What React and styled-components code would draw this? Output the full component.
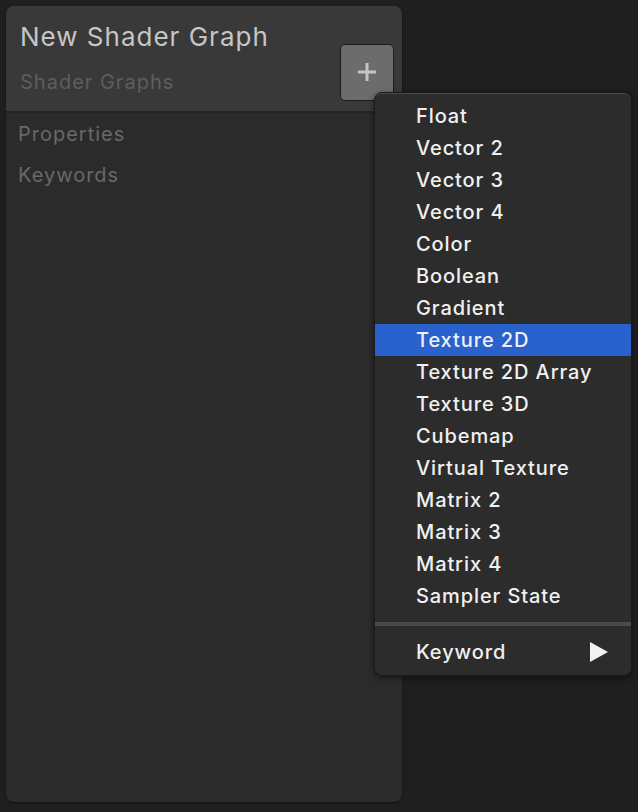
import React from 'react';
import styled, { createGlobalStyle } from 'styled-components';

const GlobalStyle = createGlobalStyle`
    html, body {
        margin: 0;
        padding: 0;
        background: #1f1f1f;
        font-family: Inter, "Liberation Sans", sans-serif;
        -webkit-font-smoothing: antialiased;
    }
`;

const items = [
    'Float', 'Vector 2', 'Vector 3', 'Vector 4', 'Color', 'Boolean', 'Gradient',
    'Texture 2D', 'Texture 2D Array', 'Texture 3D', 'Cubemap', 'Virtual Texture',
    'Matrix 2', 'Matrix 3', 'Matrix 4', 'Sampler State',
];

const App = () => {
    return (
        <Page>
            <GlobalStyle />
            <Blackboard>
                <Header>
                    <Titles>
                        <Title>New Shader Graph</Title>
                        <Subtitle>Shader Graphs</Subtitle>
                    </Titles>
                    <AddButton aria-label="Add">
                        <svg width="20" height="20" viewBox="0 0 20 20">
                            <path d="M10 1v18M1 10h18" stroke="#c4c4c4" strokeWidth="3" />
                        </svg>
                    </AddButton>
                </Header>
                <Section>Properties</Section>
                <Section>Keywords</Section>
            </Blackboard>
            <Menu>
                {items.map((name) => (
                    <Item key={name} active={name === 'Texture 2D'}>{name}</Item>
                ))}
                <Separator />
                <Item>
                    Keyword
                    <Arrow viewBox="0 0 18 20" width="18" height="20">
                        <path d="M0 0L18 10L0 20Z" fill="#f2f2f2" />
                    </Arrow>
                </Item>
            </Menu>
        </Page>
    );
};

const Page = styled.div`
    position: relative;
    width: 638px;
    height: 812px;
    padding: 6px;
    box-sizing: border-box;
    overflow: hidden;
`;

const Blackboard = styled.div`
    width: 396px;
    height: 796px;
    background: #2b2b2b;
    border-radius: 8px;
    box-shadow: 0 1px 2px rgba(0, 0, 0, 0.5);
    overflow: hidden;
`;

const Header = styled.div`
    display: flex;
    justify-content: space-between;
    height: 105px;
    background: #393939;
    border-bottom: 2px solid #232323;
    padding: 0 8px 0 14px;
`;

const Titles = styled.div`
    display: flex;
    flex-direction: column;
`;

const Title = styled.div`
    margin-top: 15px;
    font-size: 26px;
    line-height: 32px;
    color: #c6c6c6;
    letter-spacing: 1px;
`;

const Subtitle = styled.div`
    margin-top: 17px;
    font-size: 20px;
    line-height: 24px;
    color: #5e5e5e;
    letter-spacing: 1px;
`;

const AddButton = styled.button`
    align-self: flex-start;
    margin-top: 38px;
    width: 54px;
    height: 57px;
    display: flex;
    align-items: center;
    justify-content: center;
    padding: 0 0 2px;
    background: #6c6c6c;
    border: 1px solid #1c1c1c;
    border-radius: 5px;
`;

const Section = styled.div`
    padding: 0 12px;
    height: 41px;
    display: flex;
    align-items: center;
    font-size: 20px;
    color: #686868;
    letter-spacing: 1px;
`;

const Menu = styled.div`
    position: absolute;
    left: 374px;
    top: 92px;
    width: 258px;
    box-sizing: border-box;
    padding: 7px 0 7px;
    background: #2c2c2c;
    border: 1px solid #1a1a1a;
    border-radius: 8px;
    box-shadow: inset 0 1px 0 #4a4a4a, 0 2px 6px rgba(0, 0, 0, 0.5);
`;

const Item = styled.div`
    position: relative;
    height: 32px;
    display: flex;
    align-items: center;
    padding-left: 41px;
    font-size: 20px;
    font-weight: 500;
    letter-spacing: 0.9px;
    color: #f0f0f0;
    background: ${(p) => (p.active ? '#2962cc' : 'transparent')};
`;

const Separator = styled.div`
    height: 4px;
    margin: 10px 0 10px;
    background: #4a4a4a;
`;

const Arrow = styled.svg`
    position: absolute;
    right: 23px;
    top: 6px;
`;

export default App;
